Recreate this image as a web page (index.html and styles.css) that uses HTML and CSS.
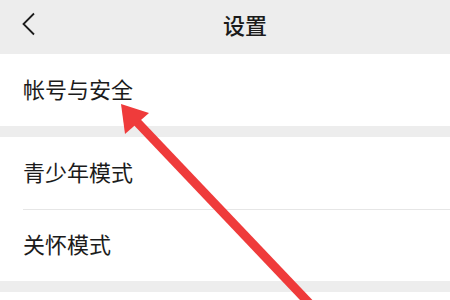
FILE: index.html
```html
<!DOCTYPE html>
<html lang="zh-CN">
  <head>
    <meta charset="UTF-8">
    <meta name="viewport" content="width=device-width, initial-scale=1.0">
    <title>设置</title>
    <link rel="stylesheet" href="styles.css">
  </head>
  <body>
    <div class="page">
      <div class="header">
        <div class="back">
          <svg width="16" height="24" viewBox="0 0 16 24">
            <polyline points="13,1.5 2.5,12 13,22.5" fill="none" stroke="#1c1c1c" stroke-width="1.8" stroke-linejoin="miter"/>
          </svg>
        </div>
        <div class="title">设置</div>
      </div>
      <div class="group">
        <div class="row">帐号与安全</div>
      </div>
      <div class="group">
        <div class="row">青少年模式</div>
        <div class="row">关怀模式</div>
      </div>
      <div class="group">
        <div class="row"></div>
      </div>
      <svg class="arrow" width="450" height="300" viewBox="0 0 450 300">
        <line x1="137" y1="122" x2="310" y2="304" stroke="#ef3b3b" stroke-width="9"/>
        <polygon points="121,104 125,134 149,113" fill="#ef3b3b"/>
      </svg>
    </div>
  </body>
</html>
```

FILE: styles.css
```css
body {
  margin: 0;
  background-color: #ededed;
  font-family: "Noto Sans CJK SC", "Noto Sans", sans-serif;
  color: #1b1b1b;
}
.page {
  position: relative;
  width: 450px;
  height: 300px;
  overflow: hidden;
}
.header {
  display: flex;
  align-items: center;
  height: 54px;
  padding-bottom: 6px;
  box-sizing: border-box;
  background-color: #ededed;
}
.back {
  width: 40px;
  padding-left: 21px;
  box-sizing: border-box;
  display: flex;
  align-items: center;
}
.title {
  flex: 1;
  text-align: center;
  font-size: 22px;
  font-weight: 500;
  line-height: 1;
}
.group {
  background-color: #fff;
  margin-bottom: 11px;
}
.row {
  height: 72px;
  margin-left: 23px;
  padding-bottom: 5px;
  display: flex;
  align-items: center;
  font-size: 22px;
  box-sizing: border-box;
}
.row + .row {
  border-top: 1px solid #e6e6e6;
}
.arrow {
  position: absolute;
  top: 0;
  left: 0;
  pointer-events: none;
}
```
